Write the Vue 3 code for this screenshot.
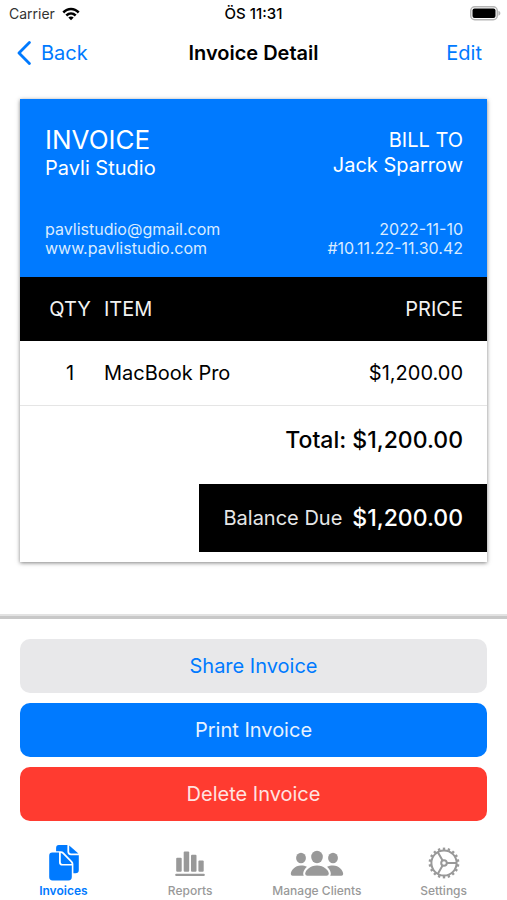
<script setup>
import { ref } from 'vue'

const invoice = {
  company: 'Pavli Studio',
  email: 'pavlistudio@gmail.com',
  website: 'www.pavlistudio.com',
  client: 'Jack Sparrow',
  date: '2022-11-10',
  number: '#10.11.22-11.30.42',
  items: [{ qty: 1, name: 'MacBook Pro', price: 1200 }],
}

const money = (value) =>
  value.toLocaleString('en-US', { style: 'currency', currency: 'USD' })

const total = invoice.items.reduce((sum, item) => sum + item.qty * item.price, 0)

const tabs = [
  { id: 'invoices', label: 'Invoices' },
  { id: 'reports', label: 'Reports' },
  { id: 'clients', label: 'Manage Clients' },
  { id: 'settings', label: 'Settings' },
]
const activeTab = ref('invoices')

const gearTeeth = Array.from({ length: 18 }, (_, i) => i * 20)
</script>

<template>
  <div class="screen">
    <div class="status">
      <div class="carrier">
        <span>Carrier</span>
        <svg class="wifi" viewBox="0 0 18 14" aria-hidden="true">
          <path d="M0.4 4.6 C5.2 -0.6 12.8 -0.6 17.6 4.6 L15.8 6.4 C11.9 2.3 6.1 2.3 2.2 6.4 Z" />
          <path d="M3.4 7.6 C6.5 4.3 11.5 4.3 14.6 7.6 L12.8 9.4 C10.6 7.2 7.4 7.2 5.2 9.4 Z" />
          <path d="M6.3 10.5 C7.8 9 10.2 9 11.7 10.5 L9 13.3 Z" />
        </svg>
      </div>
      <time class="clock">ÖS 11:31</time>
      <svg class="battery" viewBox="0 0 31 15" aria-hidden="true">
        <rect class="battery-shell" x="0.75" y="0.75" width="26.5" height="13" rx="4" />
        <rect class="battery-level" x="2.5" y="2.5" width="23" height="9.5" rx="2" />
        <path class="battery-cap" d="M28.4 4.8 C31 5.8 31 8.8 28.4 9.8 Z" />
      </svg>
    </div>

    <nav class="navbar">
      <a class="back" href="#">
        <svg class="chevron" viewBox="0 0 14 24" aria-hidden="true">
          <path d="M12.4 1.5 L2 12 L12.4 22.5" />
        </svg>
        <span>Back</span>
      </a>
      <h1 class="title">Invoice Detail</h1>
      <button class="edit" type="button">Edit</button>
    </nav>

    <main class="content">
      <article class="invoice">
        <header class="head">
          <div class="head-row">
            <div>
              <h2 class="heading">INVOICE</h2>
              <p class="party">{{ invoice.company }}</p>
            </div>
            <div class="right">
              <p class="party">BILL TO</p>
              <p class="party">{{ invoice.client }}</p>
            </div>
          </div>
          <div class="head-row meta">
            <div>
              <p>{{ invoice.email }}</p>
              <p>{{ invoice.website }}</p>
            </div>
            <div class="right">
              <p>{{ invoice.date }}</p>
              <p>{{ invoice.number }}</p>
            </div>
          </div>
        </header>

        <table class="items">
          <thead>
            <tr>
              <th class="qty" scope="col">QTY</th>
              <th class="item" scope="col">ITEM</th>
              <th class="price" scope="col">PRICE</th>
            </tr>
          </thead>
          <tbody>
            <tr v-for="item in invoice.items" :key="item.name">
              <td class="qty">{{ item.qty }}</td>
              <td class="item">{{ item.name }}</td>
              <td class="price">{{ money(item.price) }}</td>
            </tr>
          </tbody>
        </table>

        <p class="total">Total: {{ money(total) }}</p>
        <div class="balance">
          <span class="balance-label">Balance Due</span>
          <span class="balance-value">{{ money(total) }}</span>
        </div>
      </article>
    </main>

    <section class="actions">
      <button class="action share" type="button">Share Invoice</button>
      <button class="action print" type="button">Print Invoice</button>
      <button class="action delete" type="button">Delete Invoice</button>
    </section>

    <nav class="tabs">
      <button
        v-for="tab in tabs"
        :key="tab.id"
        class="tab"
        :class="{ active: activeTab === tab.id }"
        type="button"
        @click="activeTab = tab.id"
      >
        <svg v-if="tab.id === 'invoices'" class="icon" viewBox="-0.8 0.4 56 38" aria-hidden="true">
          <path d="M23 1.5 H31.6 V8 Q31.6 11.6 35.2 11.6 H43 V26.4 Q43 29.6 39.8 29.6 H37.6 V20.4 Q37.6 18.8 36.4 17.6 L28 9 Q26.8 7.6 25 7.6 H20.3 V4.5 Q20.3 1.5 23 1.5 Z" />
          <path d="M33.4 1.8 L42.6 10 H35.2 Q33.4 10 33.4 8.2 Z" />
          <path d="M16.5 9 H23.2 V18.6 Q23.2 22 26.6 22 H36 V33.4 Q36 36.8 32.6 36.8 H16.8 Q13.4 36.8 13.4 33.4 V12.2 Q13.4 9 16.5 9 Z" />
          <path d="M25 9.3 Q25.9 9.4 26.7 10.2 L34.8 18.5 Q35.7 19.4 35.8 20.3 H26.7 Q25 20.3 25 18.6 Z" />
        </svg>
        <svg v-else-if="tab.id === 'reports'" class="icon" viewBox="0 0 56 38" aria-hidden="true">
          <rect x="14.2" y="13.8" width="5.5" height="14" rx="1" />
          <rect x="21.7" y="7.6" width="5.5" height="20.2" rx="1" />
          <rect x="29" y="10.8" width="5.5" height="17" rx="1" />
          <rect x="36.4" y="16.4" width="5.3" height="11.4" rx="1" />
          <rect x="13.2" y="29.7" width="29.6" height="2.4" rx="1" />
        </svg>
        <svg v-else-if="tab.id === 'clients'" class="icon" viewBox="0 0 56 38" aria-hidden="true">
          <ellipse cx="12" cy="14" rx="4.9" ry="5.3" />
          <ellipse cx="44" cy="14" rx="4.9" ry="5.3" />
          <ellipse cx="28" cy="13" rx="5.8" ry="6.2" />
          <path d="M28 21.4 C35 21.4 39.8 26.3 39.8 29.8 Q39.8 31.8 37.6 31.8 H18.4 Q16.2 31.8 16.2 29.8 C16.2 26.3 21 21.4 28 21.4 Z" />
          <path d="M12 21.4 C14.3 21.4 16.3 21.9 17.9 22.7 C15.5 24.8 14.2 27.4 14.2 29.6 Q14.2 31 14.8 31.8 H3.6 Q1.8 31.8 1.8 30 C1.8 26.3 6 21.4 12 21.4 Z" />
          <path d="M44 21.4 C41.7 21.4 39.7 21.9 38.1 22.7 C40.5 24.8 41.8 27.4 41.8 29.6 Q41.8 31 41.2 31.8 H52.4 Q54.2 31.8 54.2 30 C54.2 26.3 50 21.4 44 21.4 Z" />
        </svg>
        <svg v-else class="icon gear" viewBox="0 0 56 38" aria-hidden="true">
          <circle cx="28" cy="19" r="12.6" />
          <circle cx="28" cy="19" r="2.8" />
          <path d="M30.8 19 H40.6 M26.6 16.6 L21.7 8.1 M26.6 21.4 L21.7 29.9" />
          <path
            v-for="angle in gearTeeth"
            :key="angle"
            class="tooth"
            d="M28 6 V3.6"
            :transform="`rotate(${angle} 28 19)`"
          />
        </svg>
        <span>{{ tab.label }}</span>
      </button>
    </nav>
  </div>
</template>

<style>
body {
  margin: 0;
  background: #fff;
}
</style>

<style scoped>
.screen {
  display: flex;
  flex-direction: column;
  min-height: 100vh;
  background: #fff;
  color: #000;
  font-family: Inter, "Liberation Sans", sans-serif;
  font-size: 20px;
  line-height: 24px;
}

p,
h1,
h2 {
  margin: 0;
}

button {
  border: 0;
  padding: 0;
  background: none;
  font: inherit;
  cursor: pointer;
}

.status {
  display: grid;
  grid-template-columns: 1fr auto 1fr;
  align-items: center;
  height: 27px;
  padding: 0 6px;
  font-size: 14px;
  line-height: 18px;
}

.carrier {
  display: flex;
  align-items: center;
  gap: 7px;
  padding-left: 3px;
  color: #333;
}

.wifi {
  width: 18px;
  height: 14px;
  fill: #000;
}

.clock {
  font-size: 15px;
  font-weight: 500;
}

.battery {
  justify-self: end;
  width: 31px;
  height: 15px;
}

.battery-shell {
  fill: #fff;
  stroke: #b5b5b5;
  stroke-width: 1.5;
}

.battery-cap {
  fill: #b5b5b5;
}

.navbar {
  display: grid;
  grid-template-columns: 1fr auto 1fr;
  align-items: center;
  height: 52px;
  padding: 0 17px;
}

.back {
  display: flex;
  align-items: center;
  gap: 10px;
  color: #007aff;
  text-decoration: none;
}

.chevron {
  width: 14px;
  height: 24px;
  fill: none;
  stroke: currentColor;
  stroke-width: 2.8;
  stroke-linecap: round;
  stroke-linejoin: round;
}

.title {
  font-size: 20px;
  font-weight: 600;
}

.edit {
  justify-self: end;
  padding: 0 8px;
  color: #007aff;
}

.content {
  flex: 1;
  padding: 20px 20px 48px;
}

.invoice {
  padding-bottom: 10px;
  background: #fff;
  box-shadow: 0 1px 4px rgba(0, 0, 0, 0.5);
}

.head {
  display: flex;
  flex-direction: column;
  gap: 39px;
  padding: 25px 24px 19px 25px;
  background: #007aff;
  color: #fff;
}

.head-row {
  display: flex;
  justify-content: space-between;
  align-items: center;
}

.right {
  text-align: right;
}

.heading {
  font-size: 26px;
  font-weight: 400;
  line-height: 32px;
}

.party {
  line-height: 25px;
}

.meta {
  color: #d9ebff;
  font-size: 16px;
  line-height: 19px;
}

.items {
  width: 100%;
  border-collapse: collapse;
}

.items th,
.items td {
  height: 64px;
  padding: 0;
  font-weight: 400;
  text-align: left;
}

.items thead {
  background: #000;
  color: #f2f2f2;
}

.items tbody tr {
  border-bottom: 1px solid #e5e5e5;
}

.items .qty {
  width: 50px;
  padding: 0 9px 0 25px;
  text-align: center;
}

.items .price {
  padding-right: 24px;
  text-align: right;
}

.total {
  padding: 20px 24px 30px;
  font-size: 23px;
  font-weight: 500;
  line-height: 28px;
  text-align: right;
}

.balance {
  display: flex;
  align-items: center;
  gap: 10px;
  width: fit-content;
  height: 68px;
  margin-left: auto;
  padding: 0 24px;
  background: #000;
  color: #fff;
}

.balance-label {
  color: #e6e6e6;
}

.balance-value {
  font-size: 23px;
  font-weight: 500;
}

.actions {
  display: flex;
  flex-direction: column;
  gap: 10px;
  padding: 20px 20px 17px;
  border-top: 3px solid #c8c8c8;
  box-shadow: 0 -2px 0 #e2e2e2;
}

.action {
  height: 54px;
  border-radius: 10px;
}

.share {
  background: #e8e8ea;
  color: #007aff;
}

.print {
  background: #007aff;
  color: #e6f2ff;
}

.delete {
  background: #ff3b30;
  color: #ffe3e1;
}

.tabs {
  display: grid;
  grid-template-columns: repeat(4, 1fr);
  padding: 6px 0 1px;
}

.tab {
  display: flex;
  flex-direction: column;
  align-items: center;
  gap: 1px;
  color: #999;
  font-size: 12px;
  font-weight: 500;
  line-height: 16px;
}

.tab.active {
  color: #007aff;
  font-weight: 600;
}

.icon {
  width: 56px;
  height: 38px;
  fill: currentColor;
}

.gear {
  fill: none;
  stroke: currentColor;
  stroke-width: 2;
}

.tooth {
  stroke-width: 2.4;
}
</style>
